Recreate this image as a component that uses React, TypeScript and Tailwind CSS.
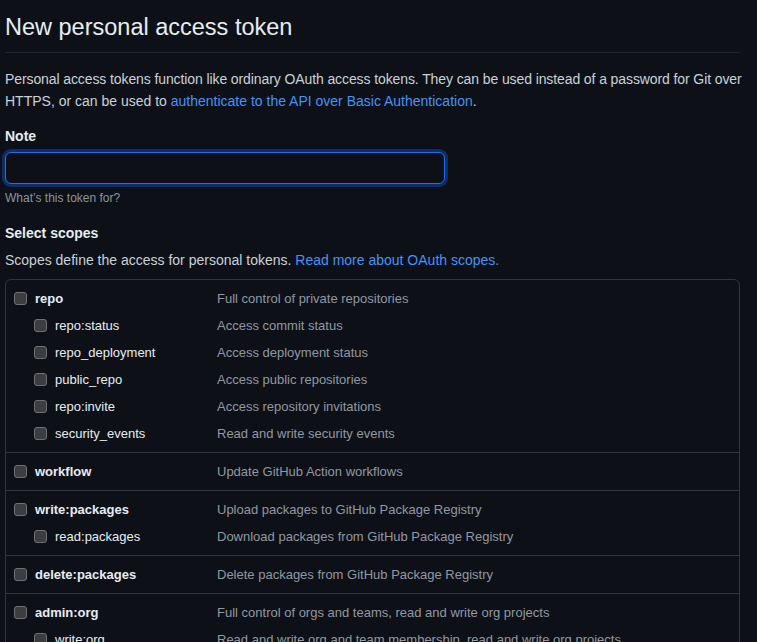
import React from "react";

type Scope = { name: string; desc: string; sub?: boolean };

const groups: Scope[][] = [
  [
    { name: "repo", desc: "Full control of private repositories" },
    { name: "repo:status", desc: "Access commit status", sub: true },
    { name: "repo_deployment", desc: "Access deployment status", sub: true },
    { name: "public_repo", desc: "Access public repositories", sub: true },
    { name: "repo:invite", desc: "Access repository invitations", sub: true },
    { name: "security_events", desc: "Read and write security events", sub: true },
  ],
  [{ name: "workflow", desc: "Update GitHub Action workflows" }],
  [
    { name: "write:packages", desc: "Upload packages to GitHub Package Registry" },
    { name: "read:packages", desc: "Download packages from GitHub Package Registry", sub: true },
  ],
  [{ name: "delete:packages", desc: "Delete packages from GitHub Package Registry" }],
  [
    { name: "admin:org", desc: "Full control of orgs and teams, read and write org projects" },
    { name: "write:org", desc: "Read and write org and team membership, read and write org projects", sub: true },
    { name: "read:org", desc: "Read org and team membership, read org projects", sub: true },
  ],
];

const ScopeRow = ({ scope }: { scope: Scope }) => (
  <div className="flex items-center h-[27px] text-[13px]">
    <div className="w-[211px] flex items-center shrink-0">
      <span
        className={`w-[13px] h-[13px] rounded-[3px] bg-[#3b3d41] border border-[#6e7076] shrink-0 ${
          scope.sub ? "ml-[28px]" : "ml-[8px]"
        }`}
      />
      <span
        className={`ml-[8px] text-[#e6edf3] ${scope.sub ? "font-normal" : "font-bold"}`}
      >
        {scope.name}
      </span>
    </div>
    <span className="text-[#9198a1] whitespace-nowrap">{scope.desc}</span>
  </div>
);

export default function App() {
  return (
    <div
      className="min-h-screen bg-[#0d1117] text-[#c9d1d9] text-[14px] overflow-hidden"
      style={{ fontFamily: '"Segoe UI", "Liberation Sans", Arial, sans-serif' }}
    >
      <div className="ml-[5px] w-[735px]">
        {/* Heading */}
        <div className="pt-[10px] pb-[8px] border-b border-[#21262d]">
          <h2 className="text-[23.5px] leading-[34px] font-normal text-[#e6edf3]">
            New personal access token
          </h2>
        </div>

        <p className="mt-[15px] leading-[22px]">
          <span className="whitespace-nowrap tracking-[-0.1px]">
            Personal access tokens function like ordinary OAuth access tokens. They can be used instead of a password for Git over
          </span>
          <br />
          HTTPS, or can be used to{" "}
          <a href="#" className="text-[#4493f8]">
            authenticate to the API over Basic Authentication
          </a>
          .
        </p>

        {/* Note */}
        <div className="mt-[13px]">
          <label className="block font-bold leading-[22px] text-[#e6edf3]">Note</label>
          <div className="mt-[5px] w-[440px] h-[32px] rounded-[6px] border border-[#1f6feb] bg-[#0d1117] shadow-[0_0_0_3px_#0c2d6b]" />
          <p className="mt-[5px] text-[12px] leading-[18px] text-[#8b949e]">What’s this token for?</p>
        </div>

        {/* Scopes */}
        <div className="mt-[15px]">
          <div className="font-bold leading-[22px] text-[#e6edf3]">Select scopes</div>
          <p className="mt-[5px] leading-[22px]">
            Scopes define the access for personal tokens.{" "}
            <a href="#" className="text-[#4493f8]">
              Read more about OAuth scopes.
            </a>
          </p>

          <div className="mt-[8px] border border-[#30363d] rounded-[6px]">
            {groups.map((g, i) => (
              <div
                key={i}
                className={`py-[5px] ${i > 0 ? "border-t border-[#30363d]" : ""}`}
              >
                {g.map((s) => (
                  <ScopeRow key={s.name} scope={s} />
                ))}
              </div>
            ))}
          </div>
        </div>
      </div>
    </div>
  );
}
